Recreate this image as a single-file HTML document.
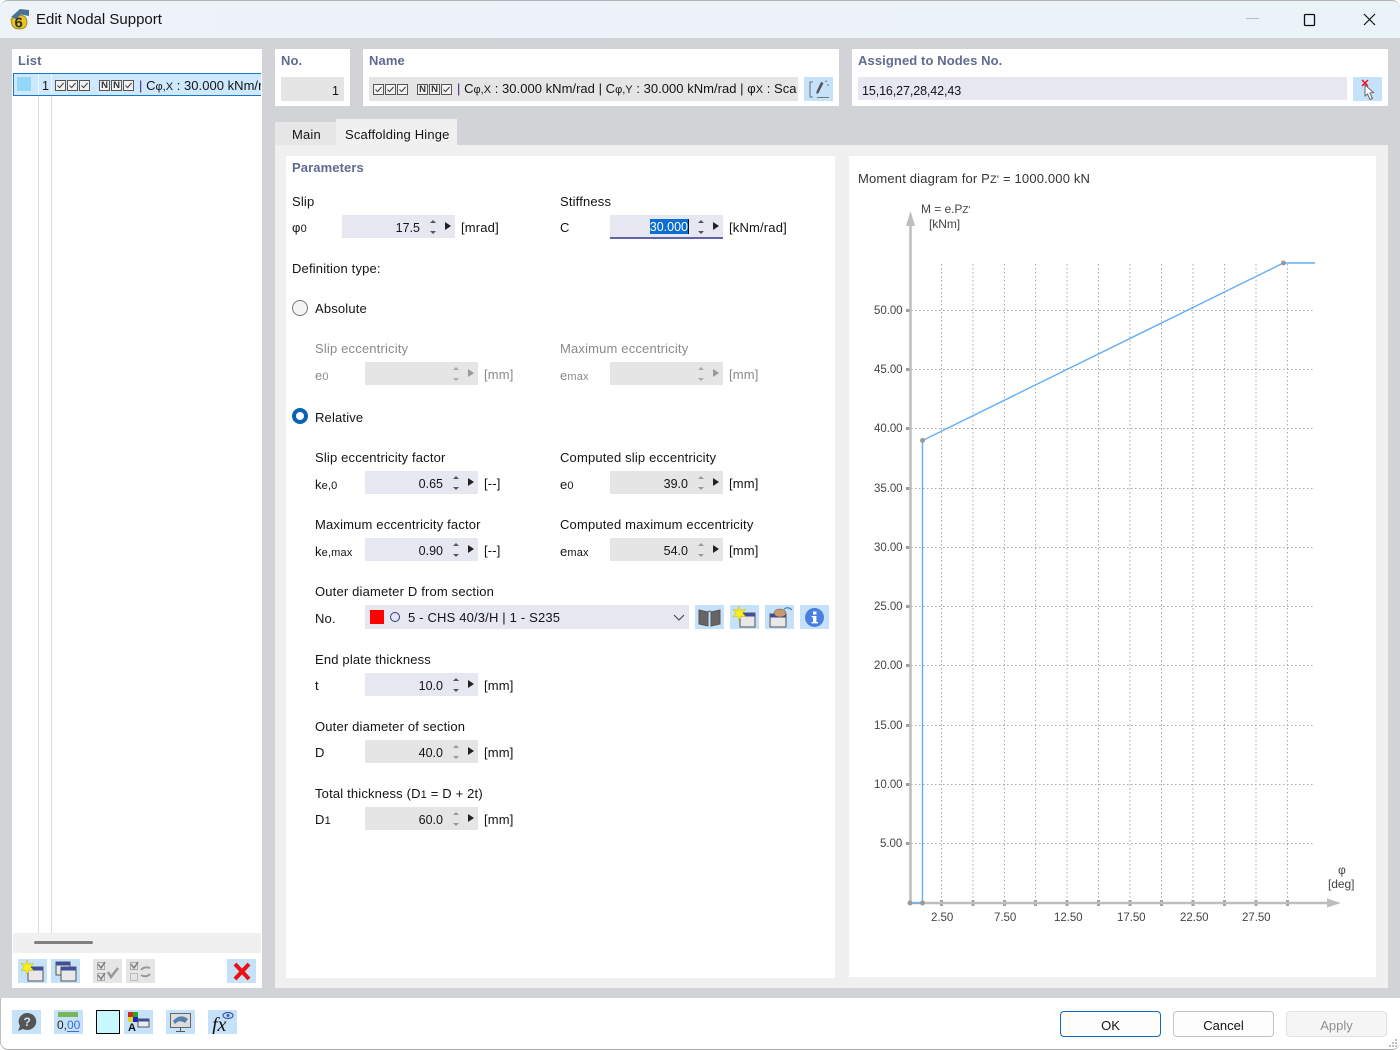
<!DOCTYPE html>
<html><head><meta charset="utf-8"><title>Edit Nodal Support</title>
<style>
html,body{margin:0;padding:0;background:#fff}
body{width:1400px;height:1050px;position:relative;overflow:hidden;font-family:"Liberation Sans",sans-serif;font-size:13px;color:#141414}
div,span.t{position:absolute;box-sizing:border-box}
.t{position:absolute;white-space:nowrap;line-height:16px;letter-spacing:.17px}
.h{font-weight:bold;color:#5f6b92;font-size:13px;letter-spacing:.1px}
.g{color:#8a8a8a}
.d{font-size:12.5px;letter-spacing:0}
.nm{letter-spacing:.03px}
.c{font-size:11.5px;letter-spacing:-.05px;color:#444}
.w{background:#fff}
.f{height:23px;width:113px;background:#e6e7f1}
.fg{background:#e5e5e5}
.v{position:absolute;right:35px;top:5px;line-height:16px;font-size:12.5px}
.up,.dn,.ar{position:absolute;width:0;height:0;border-style:solid;border-color:transparent}
.up{left:88px;top:5px;border-width:0 3px 3px;border-bottom-color:#555}
.dn{left:88px;top:16px;border-width:3px 3px 0;border-top-color:#555}
.ar{left:103px;top:7px;border-width:4px 0 4px 6px;border-left-color:#222}
.dis .up{border-bottom-color:#aaa}.dis .dn{border-top-color:#aaa}.dis .ar{border-left-color:#999}
.ib{background:#c5e2fa;width:29px;height:24px}
.ib svg,.gb svg{position:absolute;left:0;top:0}
.gb{background:#e5e5e5;width:29px;height:24px}
small{font-size:11px}
.cb,.nb{width:11px;height:11px;border:1px solid #555;background:#f2f2f2}
.nb{font-size:9.5px;line-height:9px;text-align:center;color:#333;font-weight:bold}
.cb svg{position:absolute;left:0;top:0}
.btn{top:1011px;width:101px;height:26px;border:1px solid #c4c4c4;border-radius:4px;background:#fdfdfd;text-align:center;line-height:27px;font-size:13px}
</style></head><body>
<svg width="0" height="0" style="position:absolute"><defs>
<symbol id="c" viewBox="0 0 9 9"><path d="M1.5 4.5 L3.6 6.6 L7.6 2" fill="none" stroke="#444" stroke-width="1.1"/></symbol>
<symbol id="win" viewBox="0 0 29 24"><rect x="10" y="8" width="15" height="14" fill="#e8e8e8" stroke="#555"/><rect x="10" y="8" width="15" height="3.5" fill="#3d4f9a"/></symbol>
<symbol id="star" viewBox="0 0 29 24"><path d="M9 1 L10.5 5.5 L15.5 4 L12.5 8 L16 12 L11 11 L9 15.5 L7.5 11 L3 12 L6 8 L3 4 L7.5 5.5 Z" fill="#f7ee20" stroke="#c9b800" stroke-width=".5"/></symbol>
</defs></svg>

<!-- window frame -->
<div style="left:0;top:0;width:1400px;height:38px;background:linear-gradient(90deg,#eef2f9,#eaf3f8);border-top:1px solid #b4b4b4;border-radius:8px 8px 0 0"></div>
<div style="left:0;top:38px;width:1400px;height:960px;background:#d2d3d7"></div>
<div style="left:0;top:998px;width:1400px;height:52px;background:#fff;border-bottom:1px solid #a8a8a8;border-left:1px solid #c0c0c0;border-radius:0 0 8px 8px"></div>

<svg style="position:absolute;left:9px;top:8px" width="22" height="22" viewBox="0 0 22 22"><path d="M2 11 Q2 21 10 21 Q18 21 18 14 Q18 8 11 7Z" fill="#e7c41f" stroke="#8a7412" stroke-width=".7"/><path d="M2 9 L11 1 L20 2 L20 8 L12 6.500 L7 11Z" fill="#4a7196"/><text x="5.500" y="19.500" font-size="15" font-weight="bold" fill="#33302a" font-family="Liberation Sans">6</text></svg>
<span class="t" style="left:36px;top:12px;font-size:15px;letter-spacing:0">Edit Nodal Support</span>
<svg style="position:absolute;left:1240px;top:8px" width="150" height="24"><path d="M6 10.500H19" stroke="#b9bcc0"/><rect x="64.500" y="6.500" width="10" height="11" rx="1" fill="none" stroke="#111" stroke-width="1.300"/><path d="M124 6 L135 17 M135 6 L124 17" stroke="#111" stroke-width="1.200"/></svg>

<!-- list -->
<div class="w" style="left:12px;top:49px;width:250px;height:939px"></div>
<span class="t h" style="left:18px;top:53px">List</span>
<div style="left:38px;top:73px;width:1px;height:860px;background:#dcdcdc"></div>
<div style="left:51px;top:73px;width:1px;height:860px;background:#dcdcdc"></div>
<div style="left:13px;top:73px;width:248px;height:23px;background:#cde8ff;border:1px solid #1a78c8;border-right:0;overflow:hidden">
 <div style="left:3px;top:3px;width:14px;height:14px;background:#92d6f8"></div>
 <div style="left:24px;top:-1px;width:1px;height:23px;background:#f3f8fc"></div>
 <div style="left:37px;top:-1px;width:1px;height:23px;background:#f3f8fc"></div>
 <span class="t d" style="left:28px;top:4px">1</span>
 <div class="cb" style="left:41px;top:6px"><svg width="9" height="9"><use href="#c"/></svg></div>
 <div class="cb" style="left:53px;top:6px"><svg width="9" height="9"><use href="#c"/></svg></div>
 <div class="cb" style="left:65px;top:6px"><svg width="9" height="9"><use href="#c"/></svg></div>
 <div class="nb" style="left:85px;top:6px">N</div>
 <div class="nb" style="left:97px;top:6px">N</div>
 <div class="cb" style="left:109px;top:6px"><svg width="9" height="9"><use href="#c"/></svg></div>
 <span class="t nm" style="left:125px;top:4px"><span style="color:#4b1c78">|</span> C<small>φ,X</small> : 30.000 kNm/rad</span>
</div>
<div style="left:13px;top:933px;width:248px;height:20px;background:#f0f0f0"></div>
<div style="left:34px;top:941px;width:59px;height:3px;background:#808080;border-radius:2px"></div>

<div class="ib" style="left:18px;top:959px"><svg width="29" height="24"><use href="#win"/><use href="#star"/></svg></div>
<div class="ib" style="left:51px;top:959px"><svg width="29" height="24"><rect x="5" y="3" width="14" height="13" fill="#e8e8e8" stroke="#555"/><rect x="5" y="3" width="14" height="3.500" fill="#3d4f9a"/><rect x="10" y="8" width="15" height="14" fill="#e8e8e8" stroke="#555"/><rect x="10" y="8" width="15" height="3.500" fill="#3d4f9a"/></svg></div>
<div class="gb" style="left:93px;top:959px"><svg width="29" height="24"><rect x="4.500" y="3.500" width="7" height="7" fill="none" stroke="#aaa"/><rect x="4.500" y="14.500" width="7" height="7" fill="none" stroke="#aaa"/><path d="M5 5 L8 9 L12 3 M5 16 L8 20 L12 14" fill="none" stroke="#777" stroke-width="1.400"/><path d="M15 13 L18 18 L25 9" fill="none" stroke="#999" stroke-width="2.600"/></svg></div>
<div class="gb" style="left:126px;top:959px"><svg width="29" height="24"><rect x="4.500" y="3.500" width="7" height="7" fill="none" stroke="#aaa"/><rect x="4.500" y="14.500" width="7" height="7" fill="none" stroke="#bbb"/><path d="M5 5 L8 9 L12 3" fill="none" stroke="#777" stroke-width="1.400"/><path d="M15 11 Q18 7 24 9 M24 15 Q20 19 15 16" fill="none" stroke="#999" stroke-width="2"/></svg></div>
<div class="ib" style="left:227px;top:959px"><svg width="29" height="24"><path d="M8 5 L22 20 M22 5 L8 20" stroke="#ee1111" stroke-width="4"/></svg></div>

<!-- top panels -->
<div class="w" style="left:275px;top:49px;width:75px;height:57px"></div>
<span class="t h" style="left:281px;top:53px">No.</span>
<div style="left:281px;top:77px;width:63px;height:24px;background:#e5e5e5"></div>
<span class="t d" style="left:332px;top:83px">1</span>

<div class="w" style="left:363px;top:49px;width:476px;height:57px"></div>
<span class="t h" style="left:369px;top:53px">Name</span>
<div style="left:369px;top:77px;width:429px;height:24px;background:#e5e5e5;overflow:hidden">
 <div class="cb" style="left:4px;top:7px"><svg width="9" height="9"><use href="#c"/></svg></div>
 <div class="cb" style="left:16px;top:7px"><svg width="9" height="9"><use href="#c"/></svg></div>
 <div class="cb" style="left:28px;top:7px"><svg width="9" height="9"><use href="#c"/></svg></div>
 <div class="nb" style="left:48px;top:7px">N</div>
 <div class="nb" style="left:60px;top:7px">N</div>
 <div class="cb" style="left:72px;top:7px"><svg width="9" height="9"><use href="#c"/></svg></div>
 <span class="t nm" style="left:88px;top:4px"><span style="color:#4b1c78">|</span> C<small>φ,X</small> : 30.000 kNm/rad | C<small>φ,Y</small> : 30.000 kNm/rad | φ<small>X</small> : Sca</span>
</div>
<div class="ib" style="left:804px;top:77px"><svg width="29" height="24"><path d="M9 5H6V20H9M13 20.500H25" fill="none" stroke="#777" stroke-width="1.100"/><path d="M17 5 L19.500 6 L14.500 16 L12.500 17 L12.500 14.500Z" fill="#555"/><path d="M21 4.500L23 4M23 8L25 8" stroke="#777"/></svg></div>

<div class="w" style="left:852px;top:49px;width:536px;height:57px"></div>
<span class="t h" style="left:858px;top:53px">Assigned to Nodes No.</span>
<div style="left:858px;top:77px;width:489px;height:23px;background:#e6e7f1"></div>
<span class="t d" style="left:862px;top:83px;letter-spacing:-.1px">15,16,27,28,42,43</span>
<div class="ib" style="left:1353px;top:77px"><svg width="29" height="24"><path d="M12 8 L12 19 L14.500 17 L17 22.500 L19.500 21.500 L17 16 L20.500 15.500Z" fill="#fff" stroke="#666"/><path d="M9 3 L15 9 M15 3 L9 9" stroke="#ee1122" stroke-width="1.500"/></svg></div>

<!-- tabs -->
<div style="left:275px;top:145px;width:1113px;height:843px;background:#f0f0f0"></div>
<div style="left:275px;top:122px;width:61px;height:23px;background:#e6e6e6"></div>
<div style="left:336px;top:119px;width:121px;height:26px;background:#f0f0f0"></div>
<span class="t" style="left:292px;top:127px">Main</span>
<span class="t" style="left:345px;top:127px">Scaffolding Hinge</span>

<!-- parameters -->
<div class="w" style="left:286px;top:156px;width:549px;height:822px"></div>
<span class="t h" style="left:292px;top:160px">Parameters</span>

<span class="t" style="left:292px;top:194px">Slip</span>
<span class="t" style="left:292px;top:220px">φ<small>0</small></span>
<div class="f" style="left:342px;top:215px"><span class="v">17.5</span><i class="up"></i><i class="dn"></i><i class="ar"></i></div>
<span class="t" style="left:461px;top:220px">[mrad]</span>

<span class="t" style="left:560px;top:194px">Stiffness</span>
<span class="t" style="left:560px;top:220px">C</span>
<div class="f" style="left:610px;top:215px;height:24px;border-bottom:2px solid #6264a7">
 <div style="left:40px;top:4px;width:39px;height:15px;background:#0a6fd0"></div>
 <div style="left:78px;top:4px;width:1px;height:15px;background:#111"></div>
 <span class="v" style="color:#fff;top:4px">30.000</span><i class="up"></i><i class="dn"></i><i class="ar"></i></div>
<span class="t" style="left:729px;top:220px">[kNm/rad]</span>

<span class="t" style="left:292px;top:261px">Definition type:</span>

<div style="left:292px;top:300px;width:16px;height:16px;border:1px solid #767676;border-radius:50%;background:#f4f4f4"></div>
<span class="t" style="left:315px;top:301px">Absolute</span>

<span class="t g" style="left:315px;top:341px">Slip eccentricity</span>
<span class="t g" style="left:315px;top:368px">e<small>0</small></span>
<div class="f fg dis" style="left:365px;top:362px"><i class="up"></i><i class="dn"></i><i class="ar"></i></div>
<span class="t g" style="left:484px;top:367px">[mm]</span>
<span class="t g" style="left:560px;top:341px">Maximum eccentricity</span>
<span class="t g" style="left:560px;top:368px">e<small>max</small></span>
<div class="f fg dis" style="left:610px;top:362px"><i class="up"></i><i class="dn"></i><i class="ar"></i></div>
<span class="t g" style="left:729px;top:367px">[mm]</span>

<div style="left:292px;top:408px;width:16px;height:16px;border:4.500px solid #0a62b5;border-radius:50%;background:#fff"></div>
<span class="t" style="left:315px;top:410px">Relative</span>

<span class="t" style="left:315px;top:450px">Slip eccentricity factor</span>
<span class="t" style="left:315px;top:477px">k<small>e,0</small></span>
<div class="f" style="left:365px;top:471px"><span class="v">0.65</span><i class="up"></i><i class="dn"></i><i class="ar"></i></div>
<span class="t" style="left:484px;top:476px">[--]</span>
<span class="t" style="left:560px;top:450px">Computed slip eccentricity</span>
<span class="t" style="left:560px;top:477px">e<small>0</small></span>
<div class="f fg" style="left:610px;top:471px"><span class="v">39.0</span><i class="up" style="border-bottom-color:#999"></i><i class="dn" style="border-top-color:#999"></i><i class="ar"></i></div>
<span class="t" style="left:729px;top:476px">[mm]</span>

<span class="t" style="left:315px;top:517px">Maximum eccentricity factor</span>
<span class="t" style="left:315px;top:544px">k<small>e,max</small></span>
<div class="f" style="left:365px;top:538px"><span class="v">0.90</span><i class="up"></i><i class="dn"></i><i class="ar"></i></div>
<span class="t" style="left:484px;top:543px">[--]</span>
<span class="t" style="left:560px;top:517px">Computed maximum eccentricity</span>
<span class="t" style="left:560px;top:544px">e<small>max</small></span>
<div class="f fg" style="left:610px;top:538px"><span class="v">54.0</span><i class="up" style="border-bottom-color:#999"></i><i class="dn" style="border-top-color:#999"></i><i class="ar"></i></div>
<span class="t" style="left:729px;top:543px">[mm]</span>

<span class="t" style="left:315px;top:584px">Outer diameter D from section</span>
<span class="t" style="left:315px;top:611px">No.</span>
<div style="left:365px;top:605px;width:324px;height:24px;background:#e6e7f1">
 <div style="left:5px;top:5px;width:14px;height:14px;background:#f00"></div>
 <div style="left:25px;top:7px;width:10px;height:10px;border:1.500px solid #2e3a8c;border-radius:50%"></div>
 <span class="t" style="left:43px;top:5px">5 - CHS 40/3/H | 1 - S235</span>
 <svg style="position:absolute;left:308px;top:9px" width="12" height="8"><path d="M1 1 L6 6 L11 1" fill="none" stroke="#444" stroke-width="1.100"/></svg>
</div>
<div class="ib" style="left:695px;top:605px"><svg width="29" height="24"><path d="M4 5 L13 7 V21 L4 19Z M25 5 L16 7 V21 L25 19Z" fill="#666" stroke="#555"/><path d="M13 7 Q14.500 5 16 7" fill="none" stroke="#555"/></svg></div>
<div class="ib" style="left:730px;top:605px"><svg width="29" height="24"><use href="#win"/><use href="#star"/></svg></div>
<div class="ib" style="left:765px;top:605px"><svg width="29" height="24"><rect x="5" y="9" width="16" height="13" fill="#e8e8e8" stroke="#555"/><rect x="5" y="9" width="16" height="3.500" fill="#3d4f9a"/><ellipse cx="15" cy="8" rx="6" ry="4" fill="#c89a72" stroke="#6a4a30" stroke-width=".5"/><path d="M19 4 Q23 1 27 5" fill="none" stroke="#4a7ab8" stroke-width="1.200"/></svg></div>
<div class="ib" style="left:800px;top:605px"><svg width="29" height="24"><circle cx="14.500" cy="12.500" r="9.500" fill="#4a7fe0"/><rect x="13" y="11" width="3.400" height="7" fill="#fff"/><rect x="13" y="6.500" width="3.400" height="3" fill="#fff"/><rect x="11.500" y="11" width="3" height="1.300" fill="#fff"/><rect x="11.500" y="17" width="6.500" height="1.400" fill="#fff"/></svg></div>

<span class="t" style="left:315px;top:652px">End plate thickness</span>
<span class="t" style="left:315px;top:678px">t</span>
<div class="f" style="left:365px;top:673px"><span class="v">10.0</span><i class="up"></i><i class="dn"></i><i class="ar"></i></div>
<span class="t" style="left:484px;top:678px">[mm]</span>

<span class="t" style="left:315px;top:719px">Outer diameter of section</span>
<span class="t" style="left:315px;top:745px">D</span>
<div class="f fg" style="left:365px;top:740px"><span class="v">40.0</span><i class="up" style="border-bottom-color:#999"></i><i class="dn" style="border-top-color:#999"></i><i class="ar"></i></div>
<span class="t" style="left:484px;top:745px">[mm]</span>

<span class="t" style="left:315px;top:786px">Total thickness (D<small>1</small> = D + 2t)</span>
<span class="t" style="left:315px;top:812px">D<small>1</small></span>
<div class="f fg" style="left:365px;top:807px"><span class="v">60.0</span><i class="up" style="border-bottom-color:#999"></i><i class="dn" style="border-top-color:#999"></i><i class="ar"></i></div>
<span class="t" style="left:484px;top:812px">[mm]</span>

<!-- chart -->
<div class="w" style="left:849px;top:156px;width:527px;height:821px"></div>
<span class="t" style="left:858px;top:171px;color:#333">Moment diagram for P<small>Z'</small> = 1000.000 kN</span>
<svg style="position:absolute;left:849px;top:156px" width="527" height="821" viewBox="849 156 527 821">
<g stroke="#a9a9a9" stroke-width="1" stroke-dasharray="1.500 2.500" fill="none">
<path d="M911 310.500H1315M911 369.500H1315M911 428.500H1315M911 488.500H1315M911 547.500H1315M911 606.500H1315M911 665.500H1315M911 725.500H1315M911 784.500H1315M911 843.500H1315"/>
<path d="M941.500 264V903M973 264V903M1004.500 264V903M1035.500 264V903M1067 264V903M1098.500 264V903M1130 264V903M1161.500 264V903M1193 264V903M1224.500 264V903M1256 264V903M1287.500 264V903"/>
</g>
<g fill="#a0a0a0">
<rect x="906" y="309" width="5" height="3"/><rect x="906" y="368" width="5" height="3"/><rect x="906" y="427" width="5" height="3"/><rect x="906" y="487" width="5" height="3"/><rect x="906" y="546" width="5" height="3"/><rect x="906" y="605" width="5" height="3"/><rect x="906" y="664" width="5" height="3"/><rect x="906" y="724" width="5" height="3"/><rect x="906" y="783" width="5" height="3"/><rect x="906" y="842" width="5" height="3"/>
<rect x="940" y="900" width="3" height="6"/><rect x="971.500" y="900" width="3" height="6"/><rect x="1003" y="900" width="3" height="6"/><rect x="1034" y="900" width="3" height="6"/><rect x="1065.500" y="900" width="3" height="6"/><rect x="1097" y="900" width="3" height="6"/><rect x="1128.500" y="900" width="3" height="6"/><rect x="1160" y="900" width="3" height="6"/><rect x="1191.500" y="900" width="3" height="6"/><rect x="1223" y="900" width="3" height="6"/><rect x="1254.500" y="900" width="3" height="6"/><rect x="1286" y="900" width="3" height="6"/>
</g>
<path d="M910.500 225V903M909 903H1328" stroke="#bdbdbd" stroke-width="2.500" fill="none"/>
<path d="M906 226 L910.500 211 L915 226Z M1327 898.500 L1341 903 L1327 907.500Z" fill="#bdbdbd"/>
<path d="M910 903H922.500V440.500L1283.500 263H1315" stroke="#62aef5" stroke-width="1.400" fill="none"/>
<circle cx="910" cy="903" r="2.500" fill="#9a9a9a"/><circle cx="922.500" cy="903" r="2.500" fill="#9a9a9a"/><circle cx="922.500" cy="440.500" r="2.500" fill="#9a9a9a"/><circle cx="1283.500" cy="263" r="2.500" fill="#9a9a9a"/>
</svg>
<span class="t c" style="left:921px;top:201px;font-size:12px">M = e.P<small style="font-size:10px">Z'</small></span>
<span class="t c" style="left:929px;top:216px;font-size:12px">[kNm]</span>
<span class="t c" style="left:874px;top:303px">50.00</span>
<span class="t c" style="left:874px;top:362px">45.00</span>
<span class="t c" style="left:874px;top:421px">40.00</span>
<span class="t c" style="left:874px;top:481px">35.00</span>
<span class="t c" style="left:874px;top:540px">30.00</span>
<span class="t c" style="left:874px;top:599px">25.00</span>
<span class="t c" style="left:874px;top:658px">20.00</span>
<span class="t c" style="left:874px;top:718px">15.00</span>
<span class="t c" style="left:874px;top:777px">10.00</span>
<span class="t c" style="left:880px;top:836px">5.00</span>
<span class="t c" style="left:931px;top:910px">2.50</span>
<span class="t c" style="left:994px;top:910px">7.50</span>
<span class="t c" style="left:1054px;top:910px">12.50</span>
<span class="t c" style="left:1117px;top:910px">17.50</span>
<span class="t c" style="left:1180px;top:910px">22.50</span>
<span class="t c" style="left:1242px;top:910px">27.50</span>
<span class="t c" style="left:1338px;top:862px;font-size:12px">φ</span>
<span class="t c" style="left:1328px;top:876px;font-size:12px">[deg]</span>

<!-- bottom bar -->
<div class="ib" style="left:12px;top:1010px"><svg width="29" height="24"><path d="M15 3 A9 8.500 0 1 1 11 19 L6 21 L8 16 A9 8.500 0 0 1 15 3Z" fill="#555"/><text x="11.500" y="16" font-size="12" font-weight="bold" fill="#cfe6fa" font-family="Liberation Sans">?</text></svg></div>
<div class="ib" style="left:54px;top:1010px"><svg width="29" height="24"><rect x="4" y="2" width="20" height="5" fill="#79b85a"/><text x="3" y="19" font-size="12" fill="#222" font-family="Liberation Sans">0,</text><text x="13" y="19" font-size="12" fill="#3a6ed8" font-family="Liberation Sans">00</text><path d="M13 21.500H25" stroke="#3a6ed8"/></svg></div>
<div style="left:96px;top:1010px;width:24px;height:24px;background:#c8f8ff;border:1.500px solid #000"></div>
<div class="ib" style="left:124px;top:1010px"><svg width="29" height="24"><rect x="4" y="2" width="5" height="5" fill="#d22"/><rect x="9" y="2" width="5" height="5" fill="#2a2"/><rect x="4" y="7" width="5" height="5" fill="#dd2"/><rect x="9" y="7" width="5" height="5" fill="#22c"/><text x="4" y="21" font-size="11" font-weight="bold" fill="#111" font-family="Liberation Sans">A</text><rect x="14" y="9" width="11" height="8" fill="#eee" stroke="#555"/><rect x="14" y="9" width="11" height="2.500" fill="#3d4f9a"/></svg></div>
<div class="ib" style="left:166px;top:1010px"><svg width="29" height="24"><rect x="4.500" y="3.500" width="20" height="14" fill="#ddd" stroke="#666"/><path d="M7 11 Q14 3 22 9 L19 13 Q13 9 9 14Z" fill="#5580b0"/><path d="M14.500 18V21M10 21.500H19" stroke="#555"/></svg></div>
<div class="ib" style="left:208px;top:1010px"><svg width="29" height="24"><text x="4" y="21" font-size="20" font-style="italic" font-family="Liberation Serif" fill="#111">fx</text><ellipse cx="20" cy="5.500" rx="5" ry="3" fill="none" stroke="#3a5aa8" stroke-width="1.200"/><circle cx="20" cy="5.500" r="1.500" fill="#3a5aa8"/></svg></div>

<div class="btn" style="left:1060px;border-color:#0f6cbd">OK</div>
<div class="btn" style="left:1173px">Cancel</div>
<div class="btn" style="left:1286px;background:#f5f5f5;border-color:#e0e0e0;color:#8f8f8f">Apply</div>
<svg style="position:absolute;left:1388px;top:1038px" width="11" height="11"><g fill="#c0c0c0"><rect x="7" y="1" width="2" height="2"/><rect x="4" y="4" width="2" height="2"/><rect x="7" y="4" width="2" height="2"/><rect x="1" y="7" width="2" height="2"/><rect x="4" y="7" width="2" height="2"/><rect x="7" y="7" width="2" height="2"/></g></svg>
</body></html>
